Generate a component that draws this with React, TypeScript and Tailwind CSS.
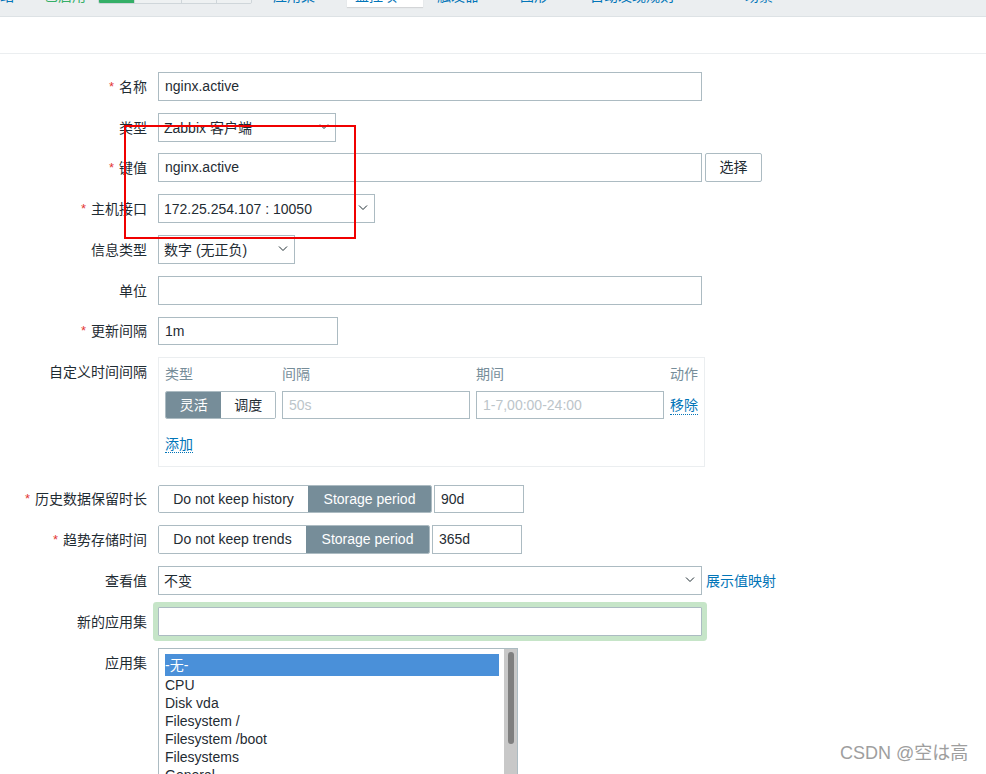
import type { ReactNode } from 'react';

// ── Small pieces ──────────────────────────────────────────────────────────────

function Chevron() {
  return (
    <svg width="10" height="6" viewBox="0 0 10 6" className="shrink-0 -mt-[2px]">
      <polyline points="1,0.5 5,4.5 9,0.5" fill="none" stroke="#1f2c33" strokeWidth="1" />
    </svg>
  );
}

function Label({ children, required = false, top = false }: { children: ReactNode; required?: boolean; top?: boolean }) {
  return (
    <div
      className={`w-[147px] shrink-0 flex justify-end text-[14px] leading-[18px] text-[#1f2c33] ${top ? 'self-start pt-[6px]' : ''}`}
    >
      {required && <span className="text-[#e33734] text-[13px] mr-[5px]">*</span>}
      <span>{children}</span>
    </div>
  );
}

function Row({ label, required, top, className = '', children }: { label: string; required?: boolean; top?: boolean; className?: string; children: ReactNode }) {
  return (
    <div className={`flex items-center ${className}`}>
      <Label required={required} top={top}>
        {label}
      </Label>
      <div className="ml-[11px] flex items-center">{children}</div>
    </div>
  );
}

function TextBox({ value = '', width, placeholder = false, h = 'h-[29px]' }: { value?: string; width: string; placeholder?: boolean; h?: string }) {
  return (
    <div
      className={`${width} ${h} border border-[#acbbc2] bg-white px-[6px] flex items-center text-[14px] ${placeholder ? 'text-[#bcc5ca]' : 'text-[#1f2c33]'}`}
    >
      {value}
    </div>
  );
}

function SelectBox({ value, width }: { value: string; width: string }) {
  return (
    <div className={`${width} h-[29px] border border-[#acbbc2] bg-white pl-[5px] pr-[6px] flex items-center justify-between text-[14px] text-[#1f2c33]`}>
      <span className="pt-[1px]">{value}</span>
      <Chevron />
    </div>
  );
}

function Segmented({ items, active, widths, h = 'h-[28px]' }: { items: string[]; active: number; widths: string[]; h?: string }) {
  return (
    <div className={`flex ${h} rounded-[2px] overflow-hidden border border-[#acbbc2]`}>
      {items.map((it, i) => (
        <div
          key={it}
          className={`${widths[i]} flex items-center justify-center text-[14px] ${
            i === active ? 'bg-[#768d99] text-white' : 'bg-white text-[#1f2c33]'
          }`}
        >
          {it}
        </div>
      ))}
    </div>
  );
}

function DottedLink({ children }: { children: ReactNode }) {
  return <span className="text-[14px] leading-[18px] text-[#0275b8] border-b border-dotted border-[#0275b8]">{children}</span>;
}

// ── Top navigation strip (scrolled, only the bottom is visible) ────────────────

function TopStrip() {
  return (
    <div className="h-[17px] bg-[#ebeef0] border-b border-[#dde2e5] overflow-hidden">
      <div className="flex items-start -mt-[11px] text-[14px] leading-[15px]">
        <span className="w-[16px] text-[#0275b8] overflow-hidden whitespace-nowrap">站</span>
        <span className="ml-[28px] w-[42px] text-[#34af67]">已启用</span>
        <div className="ml-[12px] flex h-[15px] rounded-b-[2px] overflow-hidden border border-[#cfd6da]">
          <span className="w-[35px] bg-[#34af67]" />
          <span className="w-[47px] bg-[#eef1f2] border-l border-[#cfd6da]" />
          <span className="w-[35px] bg-[#eef1f2] border-l border-[#cfd6da]" />
          <span className="w-[35px] bg-[#eef1f2] border-l border-[#cfd6da]" />
        </div>
        <span className="ml-[21px] w-[42px] text-[#0275b8]">应用集</span>
        <div className="ml-[32px] w-[76px] h-[18px] bg-white shadow-[0_1px_1px_rgba(0,0,0,0.1)] pl-[8px] text-[#0275b8]">监控项</div>
        <span className="ml-[14px] w-[42px] text-[#0275b8]">触发器</span>
        <span className="ml-[41px] w-[28px] text-[#0275b8]">图形</span>
        <span className="ml-[42px] w-[84px] text-[#0275b8]">自动发现规则</span>
        <span className="ml-[71px] text-[#0275b8]">场景</span>
      </div>
    </div>
  );
}

// ── Custom interval table ─────────────────────────────────────────────────────

function CustomIntervals() {
  return (
    <div className="w-[547px] h-[110px] border border-[#ebeef0] pl-[6px] pt-[7px]">
      <div className="flex gap-[6px] text-[14px] leading-[18px] text-[#768d99]">
        <span className="w-[111px]">类型</span>
        <span className="w-[188px]">间隔</span>
        <span className="w-[188px]">期间</span>
        <span>动作</span>
      </div>
      <div className="flex items-center gap-[6px] mt-[8px]">
        <div className="w-[111px]">
          <Segmented items={['灵活', '调度']} active={0} widths={['w-[56px]', 'w-[54px]']} />
        </div>
        <TextBox value="50s" width="w-[188px]" placeholder h="h-[28px]" />
        <TextBox value="1-7,00:00-24:00" width="w-[188px]" placeholder h="h-[28px]" />
        <DottedLink>移除</DottedLink>
      </div>
      <div className="mt-[16px] leading-[18px]">
        <DottedLink>添加</DottedLink>
      </div>
    </div>
  );
}

// ── Application list box ──────────────────────────────────────────────────────

const APPS = ['CPU', 'Disk vda', 'Filesystem /', 'Filesystem /boot', 'Filesystems', 'General', 'Interface eth0'];

function AppList() {
  return (
    <div className="w-[360px] h-[140px] border border-[#acbbc2] bg-white flex overflow-hidden">
      <div className="flex-1 pl-[6px] pr-[5px] pt-[5px] text-[14px] text-[#1f2c33]">
        <div className="h-[22px] bg-[#4a90d9] text-white flex items-center">-无-</div>
        {APPS.map((a) => (
          <div key={a} className="h-[18px] leading-[18px]">
            {a}
          </div>
        ))}
      </div>
      <div className="w-[13px] bg-[#c8c8c8] flex justify-center pt-[3px]">
        <div className="w-[6px] h-[92px] rounded-full bg-[#7f7f7f]" />
      </div>
    </div>
  );
}

// ── Page ──────────────────────────────────────────────────────────────────────

export default function App() {
  return (
    <div className="relative w-full h-[774px] overflow-hidden bg-white font-['Liberation_Sans','Noto_Sans_CJK_SC',sans-serif] text-[#1f2c33]">
      <TopStrip />
      <div className="h-[37px] border-b border-[#ebeef0]" />

      <div className="pt-[18px]">
        <Row label="名称" required>
          <TextBox value="nginx.active" width="w-[544px]" />
        </Row>
        <Row label="类型" className="mt-[12px]">
          <SelectBox value="Zabbix 客户端" width="w-[178px]" />
        </Row>
        <Row label="键值" required className="mt-[11px]">
          <TextBox value="nginx.active" width="w-[544px]" />
          <div className="ml-[3px] w-[57px] h-[29px] border border-[#acbbc2] rounded-[2px] bg-white flex items-center justify-center text-[14px]">
            选择
          </div>
        </Row>
        <Row label="主机接口" required className="mt-[12px]">
          <SelectBox value="172.25.254.107 : 10050" width="w-[217px]" />
        </Row>
        <Row label="信息类型" className="mt-[12px]">
          <SelectBox value="数字 (无正负)" width="w-[137px]" />
        </Row>
        <Row label="单位" className="mt-[12px]">
          <TextBox width="w-[544px]" />
        </Row>
        <Row label="更新间隔" required className="mt-[12px]">
          <TextBox value="1m" width="w-[180px]" h="h-[28px]" />
        </Row>
        <Row label="自定义时间间隔" top className="mt-[12px]">
          <CustomIntervals />
        </Row>
        <Row label="历史数据保留时长" required className="mt-[18px]">
          <Segmented items={['Do not keep history', 'Storage period']} active={1} widths={['w-[149px]', 'w-[123px]']} />
          <div className="ml-[2px]">
            <TextBox value="90d" width="w-[90px]" h="h-[28px]" />
          </div>
        </Row>
        <Row label="趋势存储时间" required className="mt-[12px]">
          <Segmented items={['Do not keep trends', 'Storage period']} active={1} widths={['w-[147px]', 'w-[123px]']} h="h-[29px]" />
          <div className="ml-[2px]">
            <TextBox value="365d" width="w-[90px]" />
          </div>
        </Row>
        <Row label="查看值" className="mt-[12px]">
          <SelectBox value="不变" width="w-[544px]" />
          <span className="ml-[4px] text-[14px] text-[#0275b8] pt-[1px]">展示值映射</span>
        </Row>
        <Row label="新的应用集" className="mt-[12px]">
          <div className="w-[544px] h-[29px] border border-[#acbbc2] bg-white rounded-[1px] shadow-[0_0_0_5px_#c6e5c8]" />
        </Row>
        <Row label="应用集" top className="mt-[12px]">
          <AppList />
        </Row>
      </div>

      {/* annotation overlay */}
      <div className="absolute left-[124px] top-[125px] w-[232px] h-[114px] border-2 border-[#f00000] pointer-events-none" />

      {/* watermark */}
      <div className="absolute left-[840px] top-[741px] text-[18px] leading-[24px] text-[#9e9e9e] whitespace-nowrap">
        CSDN @空は高
      </div>
    </div>
  );
}
